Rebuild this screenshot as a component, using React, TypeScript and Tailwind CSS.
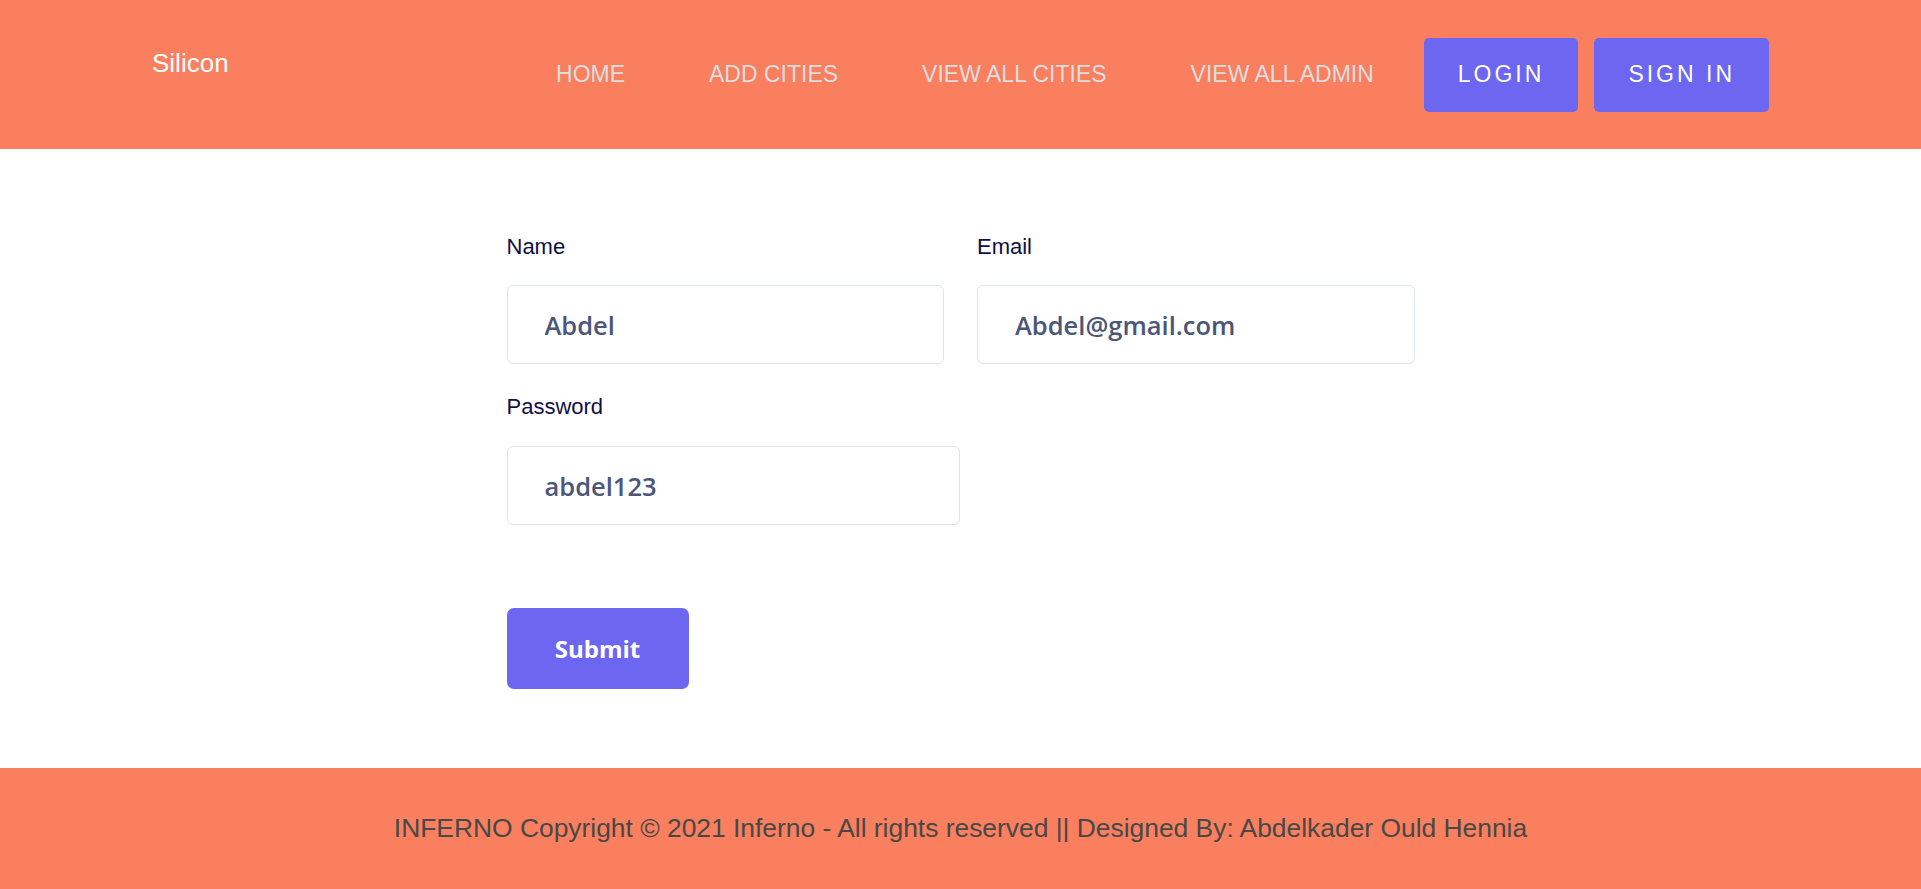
import React from 'react';

export default function App() {
  const navLinks = ["HOME", "ADD CITIES", "VIEW ALL CITIES", "VIEW ALL ADMIN"];

  return (
    <div className="min-h-screen flex flex-col bg-white font-['Liberation_Sans',Arial,sans-serif]">
      {/* HEADER */}
      <header className="h-[149px] bg-[#fa7f5e] px-[152px] flex items-center justify-between">
        <div className="mb-[23px] text-[26px] leading-[30px] text-white">Silicon</div>
        <nav className="flex items-center">
          <ul className="flex items-center gap-[84px] mr-[50px]">
            {navLinks.map((link) => (
              <li key={link}>
                <a href="#" className="text-[23px] leading-[28px] text-[#dedede]">{link}</a>
              </li>
            ))}
          </ul>
          <div className="flex items-center gap-4">
            <button className="h-[74px] px-[34px] rounded-[5px] bg-[#6c66f0] text-white text-[23px] tracking-[3px]">
              LOGIN
            </button>
            <button className="h-[74px] px-[34px] rounded-[5px] bg-[#6c66f0] text-white text-[23px] tracking-[3px]">
              SIGN IN
            </button>
          </div>
        </nav>
      </header>

      {/* FORM */}
      <main className="flex-1 pt-[85px] pb-[79px]">
        <form className="w-[908px] mx-auto" onSubmit={(e) => e.preventDefault()}>
          <div className="grid grid-cols-2 gap-x-[33px]">
            <div>
              <label className="block text-[22px] leading-[26px] text-[#0f0f45]">Name</label>
              <input
                defaultValue="Abdel"
                className="mt-[25px] w-full h-[79px] rounded-[6px] border border-[#dfe3ec] pl-[37px] text-[25.5px] font-semibold text-[#4b5679] font-['Open_Sans',sans-serif] outline-none"
              />
            </div>
            <div>
              <label className="block text-[22px] leading-[26px] text-[#0f0f45]">Email</label>
              <input
                defaultValue="Abdel@gmail.com"
                className="mt-[25px] w-full h-[79px] rounded-[6px] border border-[#dfe3ec] pl-[37px] text-[25.5px] font-semibold text-[#4b5679] font-['Open_Sans',sans-serif] outline-none"
              />
            </div>
          </div>

          <div className="mt-[30px]">
            <label className="block text-[22px] leading-[26px] text-[#0f0f45]">Password</label>
            <input
              defaultValue="abdel123"
              className="mt-[26px] w-[453px] h-[79px] rounded-[6px] border border-[#dfe3ec] pl-[37px] text-[25.5px] font-semibold text-[#4b5679] font-['Open_Sans',sans-serif] outline-none"
            />
          </div>

          <button
            type="submit"
            className="mt-[83px] w-[182px] h-[81px] rounded-[7px] bg-[#6c66f0] text-white text-[24px] font-bold font-['Open_Sans',sans-serif]"
          >
            Submit
          </button>
        </form>
      </main>

      {/* FOOTER */}
      <footer className="h-[122px] bg-[#fa7f5e] flex items-center justify-center">
        <p className="text-[26.4px] text-[#484848]">
          INFERNO Copyright © 2021 Inferno - All rights reserved || Designed By: Abdelkader Ould Hennia
        </p>
      </footer>
    </div>
  );
}
